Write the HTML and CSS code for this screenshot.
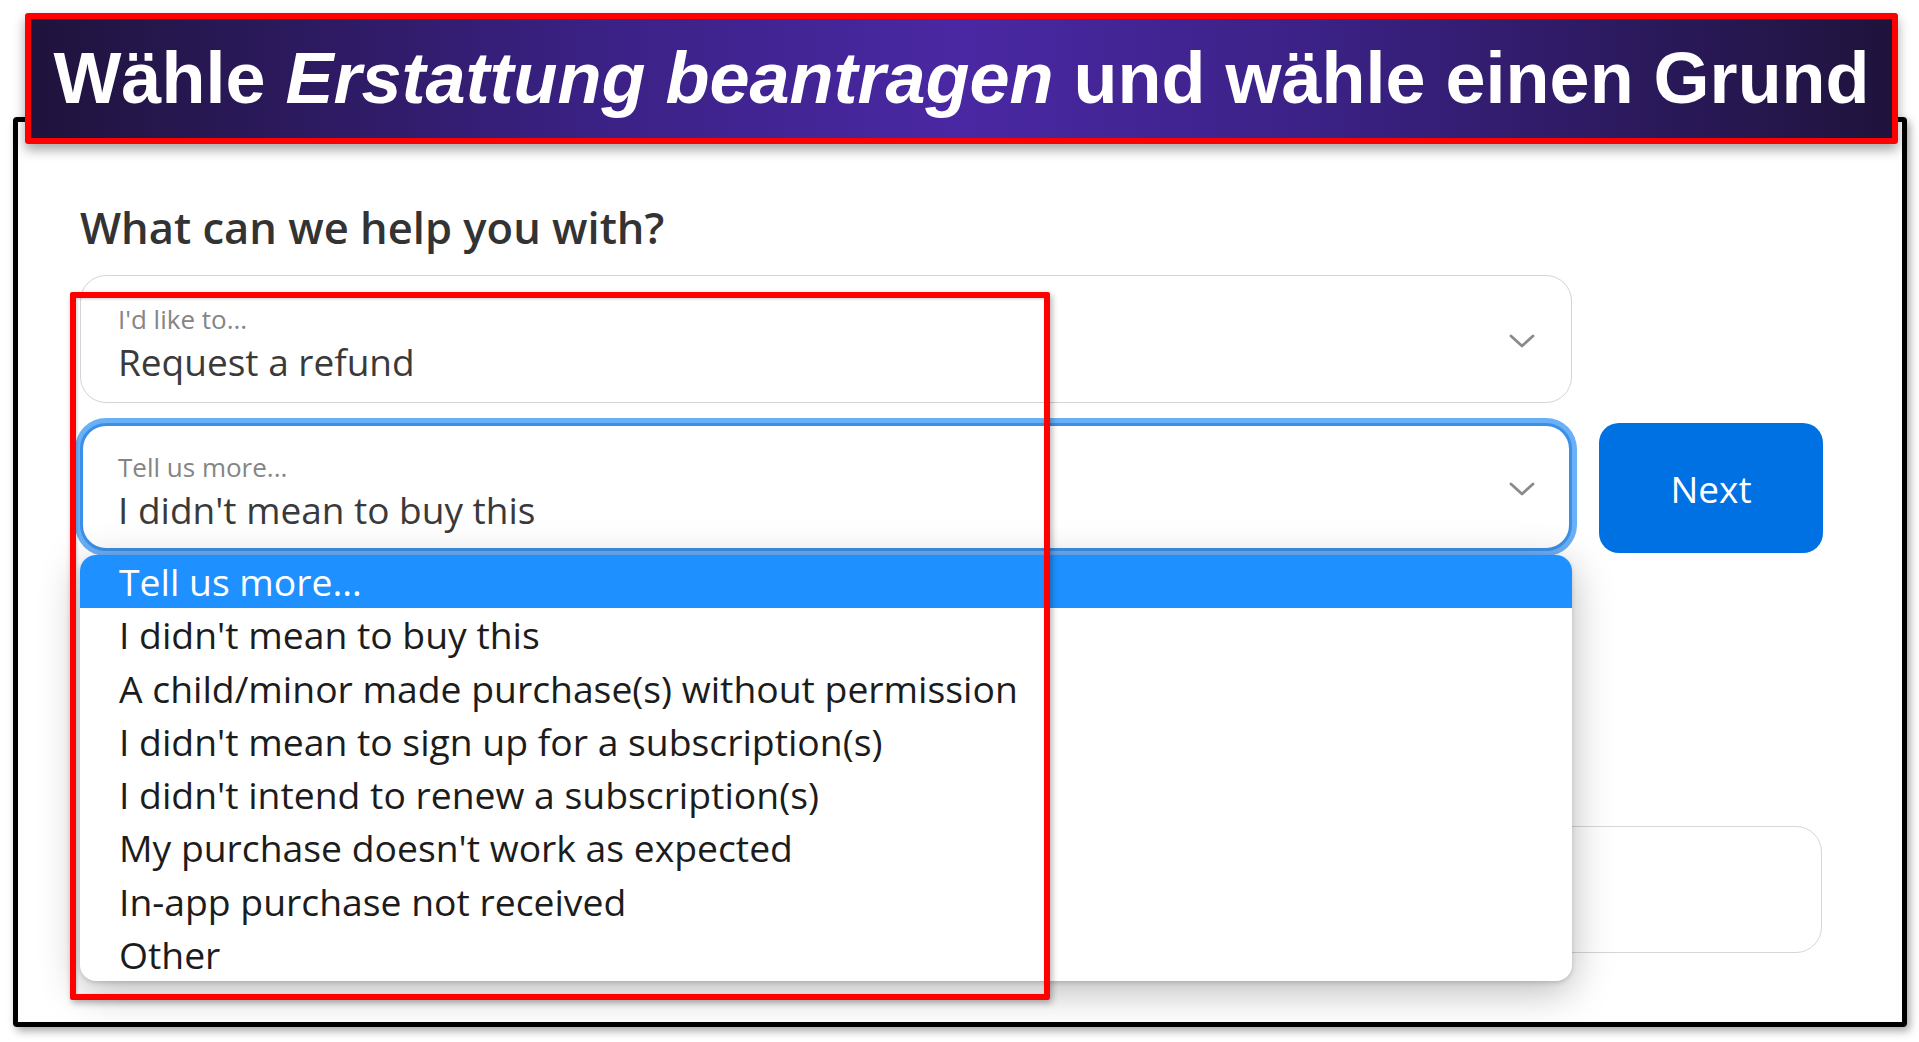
FILE: index.html
```html
<!DOCTYPE html>
<html lang="en">
<head>
<meta charset="utf-8">
<title>Refund</title>
<link rel="stylesheet" href="styles.css">
</head>
<body>
<div class="stage">
  <div class="frame">
    <div class="form">
      <h1 class="title">What can we help you with?</h1>
      <div class="select">
        <div class="select-text">
          <div class="select-label">I'd like to...</div>
          <div class="select-value">Request a refund</div>
        </div>
        <svg class="chev" width="26" height="14" viewBox="0 0 26 14"><polyline points="2,2 13,12 24,2" fill="none" stroke="#8a8a8a" stroke-width="2.8" stroke-linecap="round" stroke-linejoin="round"/></svg>
      </div>
      <div class="row">
        <div class="select-wrap">
          <div class="select select-focus">
            <div class="select-text">
              <div class="select-label">Tell us more...</div>
              <div class="select-value">I didn't mean to buy this</div>
            </div>
            <svg class="chev" width="26" height="14" viewBox="0 0 26 14"><polyline points="2,2 13,12 24,2" fill="none" stroke="#8a8a8a" stroke-width="2.8" stroke-linecap="round" stroke-linejoin="round"/></svg>
          </div>
          <ul class="dropdown">
            <li class="opt opt-active">Tell us more...</li>
            <li class="opt">I didn't mean to buy this</li>
            <li class="opt">A child/minor made purchase(s) without permission</li>
            <li class="opt">I didn't mean to sign up for a subscription(s)</li>
            <li class="opt">I didn't intend to renew a subscription(s)</li>
            <li class="opt">My purchase doesn't work as expected</li>
            <li class="opt">In-app purchase not received</li>
            <li class="opt">Other</li>
          </ul>
        </div>
        <button class="next" type="button">Next</button>
      </div>
      <div class="field"></div>
    </div>
  </div>
  <div class="banner">Wähle <em>Erstattung beantragen</em> und wähle einen Grund</div>
  <div class="highlight"></div>
</div>
</body>
</html>
```
FILE: styles.css
```css
* { box-sizing: border-box; }
html, body { margin: 0; padding: 0; background: #ffffff; }
body { font-family: "Open Sans", "Noto Sans", sans-serif; }

.stage {
  position: relative;
  width: 1919px;
  height: 1042px;
  overflow: hidden;
}

.frame {
  margin: 117px 0 0 13px;
  width: 1894px;
  height: 910px;
  border: 5px solid #000;
  border-radius: 4px;
  background: #fff;
  box-shadow: 3px 4px 9px rgba(0,0,0,0.35);
  overflow: hidden;
}

.form {
  padding: 78px 0 0 62px;
}

.title {
  margin: 0 0 19px 0;
  font-size: 43.5px;
  line-height: 56px;
  font-weight: 600;
  color: #333;
}

.select {
  width: 1492px;
  height: 128px;
  border: 1.5px solid #d4d4d4;
  border-radius: 26px;
  background: #fff;
  display: flex;
  align-items: center;
  justify-content: space-between;
  padding: 0 36px 0 37px;
}

.select-text {
  display: flex;
  flex-direction: column;
  padding-top: 10px;
}

.select-label {
  font-size: 26px;
  line-height: 34px;
  color: #858585;
}

.select-value {
  margin-top: 2px;
  font-size: 37px;
  line-height: 48px;
  color: #3a3a3a;
}

.chev { display: block; flex: none; margin-top: 4px; }

.row {
  margin-top: 20px;
  display: flex;
  align-items: flex-start;
  gap: 27px;
}

.select-wrap {
  position: relative;
  width: 1492px;
}

.select-focus {
  border: 3px solid #3c8fe9;
  box-shadow: 0 0 0 5px #6ab0f6;
  padding-left: 35px;
  padding-right: 34px;
}

.dropdown {
  position: absolute;
  top: 132px;
  left: 0;
  width: 1492px;
  margin: 0;
  padding: 0;
  list-style: none;
  background: #fff;
  border-radius: 16px;
  overflow: hidden;
  box-shadow: 0 10px 40px rgba(0,0,0,0.28), 0 2px 4px rgba(0,0,0,0.15);
  z-index: 2;
}

.opt {
  height: 53.3px;
  line-height: 53.3px;
  padding-left: 39px;
  font-size: 37.3px;
  color: #1c1c1c;
  white-space: nowrap;
}

.opt-active {
  background: #1e90ff;
  color: #fff;
}

.next {
  width: 224px;
  height: 130px;
  border: none;
  border-radius: 20px;
  background: #0071e3;
  color: #fff;
  font-family: "Open Sans", "Noto Sans", sans-serif;
  font-size: 37px;
  font-weight: 500;
  padding: 0;
}

.field {
  margin-top: 273px;
  width: 1742px;
  height: 127px;
  border: 1.5px solid #d6d6d6;
  border-radius: 26px;
}

.banner {
  position: absolute;
  left: 25px;
  top: 13px;
  width: 1873px;
  height: 131px;
  border: 6px solid #ff0000;
  border-radius: 3px;
  background: linear-gradient(90deg, #1f133c 0%, #3a2184 30%, #4a28a3 50%, #3a2184 70%, #1f133c 100%);
  box-shadow: 0 6px 12px rgba(0,0,0,0.35);
  font-family: "Liberation Sans", Arial, sans-serif;
  font-weight: 700;
  font-size: 72px;
  line-height: 119px;
  color: #fff;
  text-align: center;
  white-space: nowrap;
  z-index: 5;
}

.banner em { font-style: italic; }

.highlight {
  position: absolute;
  left: 70px;
  top: 292px;
  width: 980px;
  height: 708px;
  border: 6px solid #ff0000;
  border-radius: 2px;
  box-shadow: 2px 3px 6px rgba(0,0,0,0.3), inset 1px 1px 3px rgba(0,0,0,0.2);
  z-index: 4;
  pointer-events: none;
}
```
